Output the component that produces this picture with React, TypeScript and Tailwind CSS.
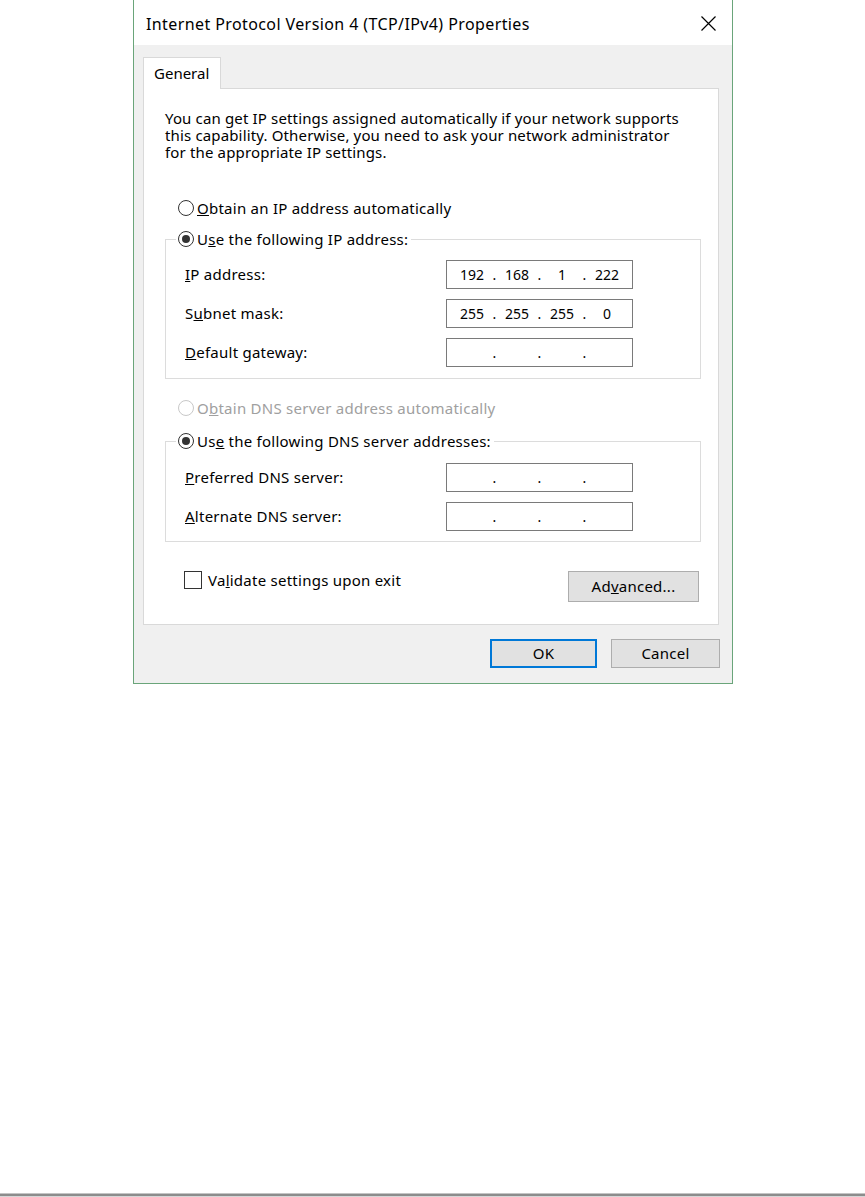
import clsx from "clsx"

const font = "font-['Noto_Sans',_'Liberation_Sans',_sans-serif]"

function Radio({ checked, disabled }: { checked?: boolean; disabled?: boolean }) {
  return (
    <span
      className={clsx(
        "w-[16px] h-[16px] rounded-full border bg-white flex items-center justify-center shrink-0",
        disabled ? "border-[#c8c8c8]" : "border-[#333333]"
      )}
    >
      {checked && <span className="w-[8px] h-[8px] rounded-full bg-[#333333]" />}
    </span>
  )
}

function IpBox({ parts }: { parts: string[] }) {
  return (
    <div className="w-[187px] h-[29px] border border-[#7a7a7a] bg-white flex items-center pl-[8px] text-[14px] tracking-normal text-black">
      {parts.map((p, i) => (
        <div key={i} className="flex">
          <span className="w-[34px] text-center">{p}</span>
          {i < 3 && <span className="w-[11px] text-center">.</span>}
        </div>
      ))}
    </div>
  )
}

function Row({ label, parts }: { label: React.ReactNode; parts: string[] }) {
  return (
    <div className="flex items-center">
      <div className="w-[261px]">{label}</div>
      <IpBox parts={parts} />
    </div>
  )
}

export default function App() {
  const empty = ["", "", "", ""]
  return (
    <div className={clsx("h-[1197px] bg-white flex flex-col text-black", font)}>
      <div className="ml-[133px] w-[600px] h-[684px] border-x border-b border-[#6aa57a] bg-[#f0f0f0] flex flex-col text-[15px] tracking-[0.25px]">
        {/* title bar */}
        <div className="h-[45px] bg-white flex items-center justify-between pl-[12px] pr-[16px] pt-[2px]">
          <span className="text-[16px] tracking-[0.4px]">Internet Protocol Version 4 (TCP/IPv4) Properties</span>
          <svg width="15" height="15" viewBox="0 0 15 15">
            <path d="M0.5 0.5L14.5 14.5M14.5 0.5L0.5 14.5" stroke="#000" strokeWidth="1.2" fill="none" />
          </svg>
        </div>

        <div className="px-[9px] pt-[12px]">
          <div className="w-[78px] h-[32px] bg-white border border-[#d9d9d9] border-b-0 pl-[10px] pt-[4px] relative z-10 -mb-[1px] tracking-normal">
            General
          </div>
          <div className="w-[576px] h-[537px] bg-white border border-[#d9d9d9] pl-[21px] pr-[17px] pt-[21px]">
            <p className="leading-[17px] tracking-[0.15px]">
              You can get IP settings assigned automatically if your network supports
              <br />
              this capability. Otherwise, you need to ask your network administrator
              <br />
              for the appropriate IP settings.
            </p>

            <div className="mt-[38px] h-[18px] flex items-center gap-[3px] pl-[13px]">
              <Radio />
              <span>
                <u>O</u>btain an IP address automatically
              </span>
            </div>

            <fieldset className="mt-[13px] border border-[#dcdcdc] pt-[12px] pb-[11px]">
              <legend className="ml-[10px] pl-[2px] pr-[3px] h-[18px] flex items-center gap-[3px]">
                <Radio checked />
                <span>
                  U<u>s</u>e the following IP address:
                </span>
              </legend>
              <div className="flex flex-col gap-[10px] pl-[19px]">
                <Row label={<><u>I</u>P address:</>} parts={["192", "168", "1", "222"]} />
                <Row label={<>S<u>u</u>bnet mask:</>} parts={["255", "255", "255", "0"]} />
                <Row label={<><u>D</u>efault gateway:</>} parts={empty} />
              </div>
            </fieldset>

            <div className="mt-[20px] h-[18px] flex items-center gap-[3px] pl-[13px] text-[#a0a0a0]">
              <Radio disabled />
              <span>
                O<u>b</u>tain DNS server address automatically
              </span>
            </div>

            <fieldset className="mt-[15px] border border-[#dcdcdc] pt-[13px] pb-[10px]">
              <legend className="ml-[10px] pl-[2px] pr-[3px] h-[18px] flex items-center gap-[3px]">
                <Radio checked />
                <span>
                  Us<u>e</u> the following DNS server addresses:
                </span>
              </legend>
              <div className="flex flex-col gap-[10px] pl-[19px]">
                <Row label={<><u>P</u>referred DNS server:</>} parts={empty} />
                <Row label={<><u>A</u>lternate DNS server:</>} parts={empty} />
              </div>
            </fieldset>

            <div className="mt-[29px] flex items-start justify-between pr-[2px]">
              <div className="flex items-center gap-[6px] pl-[19px] h-[18px]">
                <span className="w-[18px] h-[18px] border border-[#333333] bg-white" />
                <span>
                  Va<u>l</u>idate settings upon exit
                </span>
              </div>
              <button className="w-[131px] h-[31px] bg-[#e1e1e1] border border-[#adadad]">
                Ad<u>v</u>anced...
              </button>
            </div>
          </div>
        </div>

        <div className="flex justify-end gap-[14px] pt-[14px] pr-[12px]">
          <button className="w-[107px] h-[29px] bg-[#e1e1e1] border-2 border-[#0078d7]">OK</button>
          <button className="w-[109px] h-[29px] bg-[#e1e1e1] border border-[#adadad]">Cancel</button>
        </div>
      </div>

      <div className="mt-auto h-[4px] flex flex-col">
        <div className="h-[1px] bg-[#c4c4c4]" />
        <div className="h-[2px] bg-[#8c8c8c]" />
        <div className="h-[1px] bg-[#d6d6d6]" />
      </div>
    </div>
  )
}
